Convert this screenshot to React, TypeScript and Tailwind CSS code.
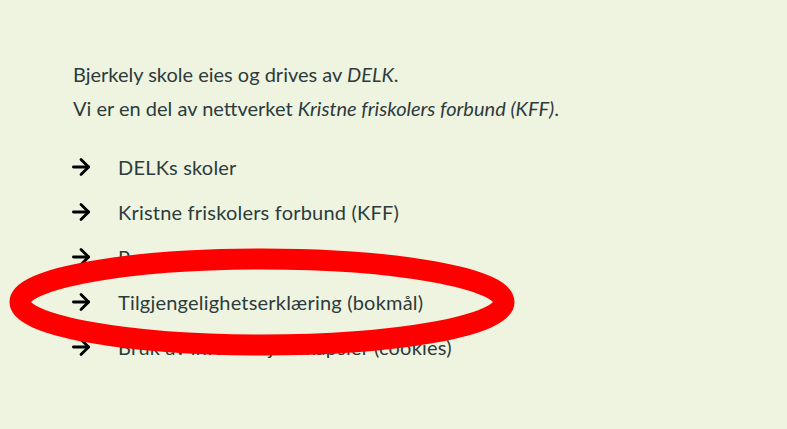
import { ArrowRight } from "lucide-react";

const links = [
  "DELKs skoler",
  "Kristne friskolers forbund (KFF)",
  "Personvernerklæring",
  "Tilgjengelighetserklæring (bokmål)",
  "Bruk av informasjonskapsler (cookies)",
];

const App = () => {
  return (
    <div className="relative w-[787px] h-[429px] overflow-hidden bg-[#eff4e1] font-['Lato',sans-serif] text-[#2c3b3c]">
      <div className="pl-[73px] pt-[57px]">
        <p className="text-[20px] leading-[34px]">
          Bjerkely skole eies og drives av <em>DELK</em>.
        </p>
        <p className="text-[20px] leading-[34px]">
          Vi er en del av nettverket <em>Kristne friskolers forbund (KFF)</em>.
        </p>

        <ul className="mt-[19px] flex flex-col">
          {links.map((label) => (
            <li key={label} className="flex items-center h-[45px]">
              <ArrowRight className="w-[26px] h-[26px] -ml-[5px] text-black shrink-0" strokeWidth={2.6} />
              <a className="ml-[24px] text-[20px] tracking-[0.2px]">{label}</a>
            </li>
          ))}
        </ul>
      </div>

      {/* annotation ring */}
      <svg className="absolute left-0 top-0 pointer-events-none" width="787" height="429">
        <ellipse cx="262" cy="302" rx="242" ry="43" fill="none" stroke="#ff0000" strokeWidth="21" />
      </svg>
    </div>
  );
};

export default App;
